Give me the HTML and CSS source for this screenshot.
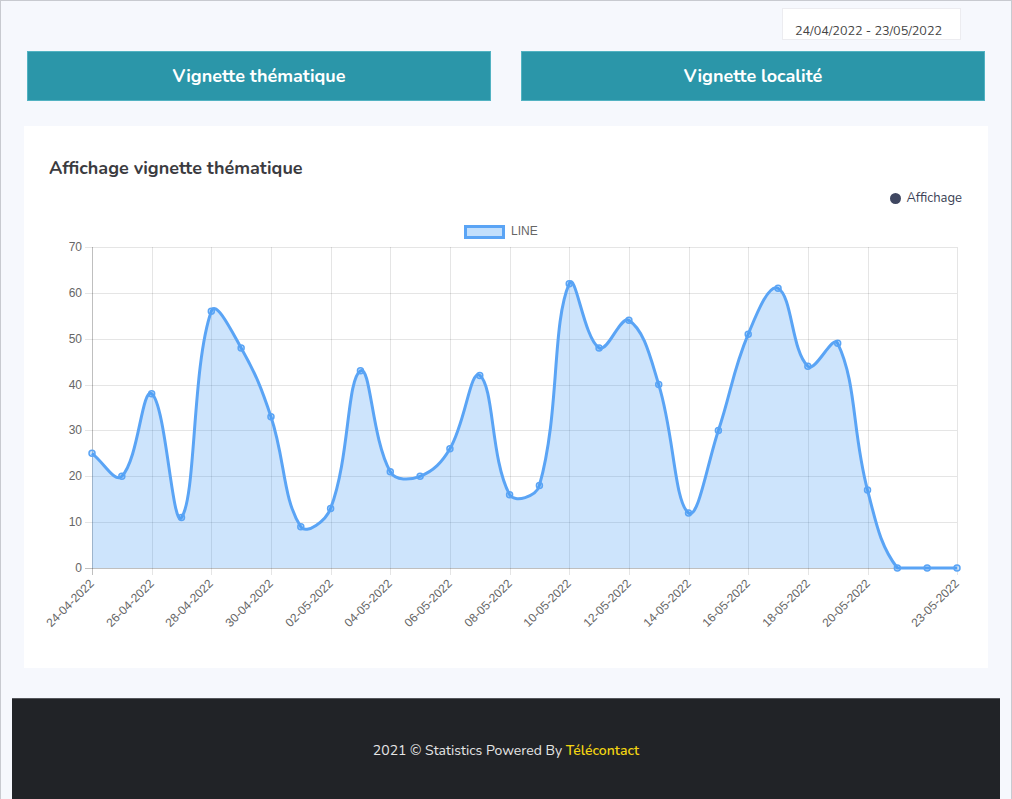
FILE: index.html
```html
<!DOCTYPE html>
<html lang="fr">
<head>
<meta charset="utf-8">
<title>Statistiques</title>
<link rel="stylesheet" href="styles.css">
</head>
<body>
<div class="page">
  <main class="content">
    <div class="toolbar">
      <div class="daterange">24/04/2022 - 23/05/2022</div>
    </div>
    <div class="tabs">
      <button class="tab">Vignette thématique</button>
      <button class="tab">Vignette localité</button>
    </div>
    <section class="card">
      <h2 class="card-title">Affichage vignette thématique</h2>
      <div class="legend"><span class="legend-dot"></span>Affichage</div>
      <svg id="chart" class="chart" width="964" height="448" viewBox="0 0 964 448"></svg>
    </section>
  </main>
  <footer class="footer">
    <p>2021 © Statistics Powered By <span class="brand">Télécontact</span></p>
  </footer>
</div>
<script src="script.js"></script>
</body>
</html>
```
FILE: styles.css
```css
* { box-sizing: border-box; }
html, body { margin: 0; padding: 0; }
body {
  font-family: "Nunito", "Open Sans", "Noto Sans", sans-serif;
  background: #ffffff;
}
.page {
  width: 1012px;
  height: 799px;
  border: 1px solid #c8cad0;
  border-bottom: none;
  background: #f6f8fd;
  overflow: hidden;
  display: flex;
  flex-direction: column;
}
.content {
  padding: 7px 23px 0 23px;
}
.toolbar {
  display: flex;
  justify-content: flex-end;
  padding-right: 27px;
}
.daterange {
  width: 179px;
  height: 32px;
  background: #fff;
  border: 1px solid #ececf0;
  padding: 14px 0 0 12px;
  font-size: 12.6px;
  line-height: 16px;
  color: #444;
  white-space: nowrap;
}
.tabs {
  display: flex;
  gap: 30px;
  padding: 11px 3px 0 3px;
}
.tab {
  flex: 1;
  height: 50px;
  background: #2b96a9;
  border: 1px solid #52b2c2;
  color: #fff;
  font-family: inherit;
  font-size: 18px;
  font-weight: 700;
  cursor: pointer;
}
.card {
  margin-top: 25px;
  background: #fff;
  padding: 30px 0 13px 0;
  display: flex;
  flex-direction: column;
}
.card-title {
  margin: 0;
  padding: 0 25px;
  font-size: 18px;
  line-height: 24px;
  font-weight: 700;
  color: #3b3b3f;
}
.legend {
  align-self: flex-end;
  margin: 9px 26px 0 0;
  display: flex;
  align-items: center;
  gap: 5px;
  font-size: 13px;
  line-height: 18px;
  color: #3b3f55;
}
.legend-dot {
  width: 11px;
  height: 11px;
  border-radius: 50%;
  background: #3f4761;
}
.chart {
  display: block;
  font-family: "Liberation Sans", Arial, sans-serif;
}
.chart .grid { stroke: rgba(0,0,0,0.1); stroke-width: 1; }
.chart .axis { stroke: rgba(0,0,0,0.25); stroke-width: 1; }
.chart .tick-label { fill: #666; font-size: 12px; }
.chart .area { fill: rgba(54,148,245,0.25); stroke: none; }
.chart .line { fill: none; stroke: #5aa4f5; stroke-width: 3; }
.chart .pt { fill: rgba(54,148,245,0.25); stroke: #5aa4f5; stroke-width: 1.5; }
.chart .legend-box { fill: rgba(54,148,245,0.3); stroke: #5aa4f5; stroke-width: 3; }
.footer {
  margin: 30px 11px 0 11px;
  flex: 1;
  background: #212327;
  border-top: 1px solid #55575c;
  padding-top: 42px;
  text-align: center;
}
.footer p {
  margin: 0;
  font-size: 14px;
  line-height: 20px;
  color: #e6e6e6;
}
.brand {
  color: #f2d412;
  font-weight: 600;
}
```
FILE: script.js
```js
(function () {
  var data = [25,20,38,11,56,48,33,9,13,43,21,20,26,42,16,18,62,48,54,40,12,30,51,61,44,49,17,0,0,0];
  var OX = 24, OY = 207;
  var L = 92 - OX, R = 957 - OX, T = 247 - OY, B = 568 - OY;
  var NS = 'http://www.w3.org/2000/svg';
  var svg = document.getElementById('chart');
  function el(name, attrs, text) {
    var e = document.createElementNS(NS, name);
    for (var k in attrs) e.setAttribute(k, attrs[k]);
    if (text != null) e.textContent = text;
    svg.appendChild(e);
    return e;
  }
  var n = data.length;
  var step = (R - L) / (n - 1);
  function xs(i) { return L + i * step; }
  function ys(v) { return B - (v / 70) * (B - T); }

  // horizontal grid + y labels
  for (var v = 0; v <= 70; v += 10) {
    var y = Math.round(ys(v)) + 0.5;
    el('line', { x1: L - 7, x2: R, y1: y, y2: y, 'class': v === 0 ? 'axis' : 'grid' });
    el('text', { x: L - 10, y: y, 'text-anchor': 'end', 'dominant-baseline': 'middle', 'class': 'tick-label' }, String(v));
  }
  // vertical grid + x labels
  var ticks = [];
  for (var i = 0; i <= 26; i += 2) ticks.push(i);
  ticks.push(29);
  function fmt(d) {
    var dd = ('0' + d.getDate()).slice(-2), mm = ('0' + (d.getMonth() + 1)).slice(-2);
    return dd + '-' + mm + '-' + d.getFullYear();
  }
  ticks.forEach(function (i) {
    var x = Math.round(xs(i)) + 0.5;
    el('line', { x1: x, x2: x, y1: T, y2: B + 7, 'class': i === 0 ? 'axis' : 'grid' });
    var d = new Date(2022, 3, 24 + i);
    var ax = x, ay = B + 14;
    el('text', { x: ax, y: ay, 'text-anchor': 'end', 'dominant-baseline': 'middle', 'class': 'tick-label',
      transform: 'rotate(-45 ' + ax + ' ' + ay + ')' }, fmt(d));
  });

  // points and bezier control points (tension 0.4, capped to chart area)
  var pts = data.map(function (val, i) { return { x: xs(i), y: ys(val) }; });
  var t = 0.4;
  function dist(a, b) { return Math.sqrt((a.x - b.x) * (a.x - b.x) + (a.y - b.y) * (a.y - b.y)); }
  function cap(p) {
    p.x = Math.max(L, Math.min(R, p.x));
    p.y = Math.max(T, Math.min(B, p.y));
    return p;
  }
  pts.forEach(function (p, i) {
    var prev = pts[i - 1] || p, next = pts[i + 1] || p;
    var d01 = dist(p, prev), d12 = dist(next, p);
    var s01 = d01 / (d01 + d12), s12 = d12 / (d01 + d12);
    if (isNaN(s01)) s01 = 0;
    if (isNaN(s12)) s12 = 0;
    var fa = t * s01, fb = t * s12;
    p.cp1 = cap({ x: p.x - fa * (next.x - prev.x), y: p.y - fa * (next.y - prev.y) });
    p.cp2 = cap({ x: p.x + fb * (next.x - prev.x), y: p.y + fb * (next.y - prev.y) });
  });
  var d = 'M' + pts[0].x + ' ' + pts[0].y;
  for (var j = 1; j < n; j++) {
    var a = pts[j - 1], b = pts[j];
    d += ' C' + a.cp2.x.toFixed(2) + ' ' + a.cp2.y.toFixed(2) + ' ' + b.cp1.x.toFixed(2) + ' ' + b.cp1.y.toFixed(2) + ' ' + b.x.toFixed(2) + ' ' + b.y.toFixed(2);
  }
  el('path', { d: d + ' L' + R + ' ' + B + ' L' + L + ' ' + B + ' Z', 'class': 'area' });
  el('path', { d: d, 'class': 'line' });
  pts.forEach(function (p) {
    el('circle', { cx: p.x, cy: p.y, r: 3, 'class': 'pt' });
  });

  // dataset legend
  el('rect', { x: 441.5, y: 19.5, width: 38, height: 11, 'class': 'legend-box' });
  el('text', { x: 487, y: 25, 'dominant-baseline': 'middle', 'class': 'tick-label', 'font-size': 11 }, 'LINE');
})();
```
